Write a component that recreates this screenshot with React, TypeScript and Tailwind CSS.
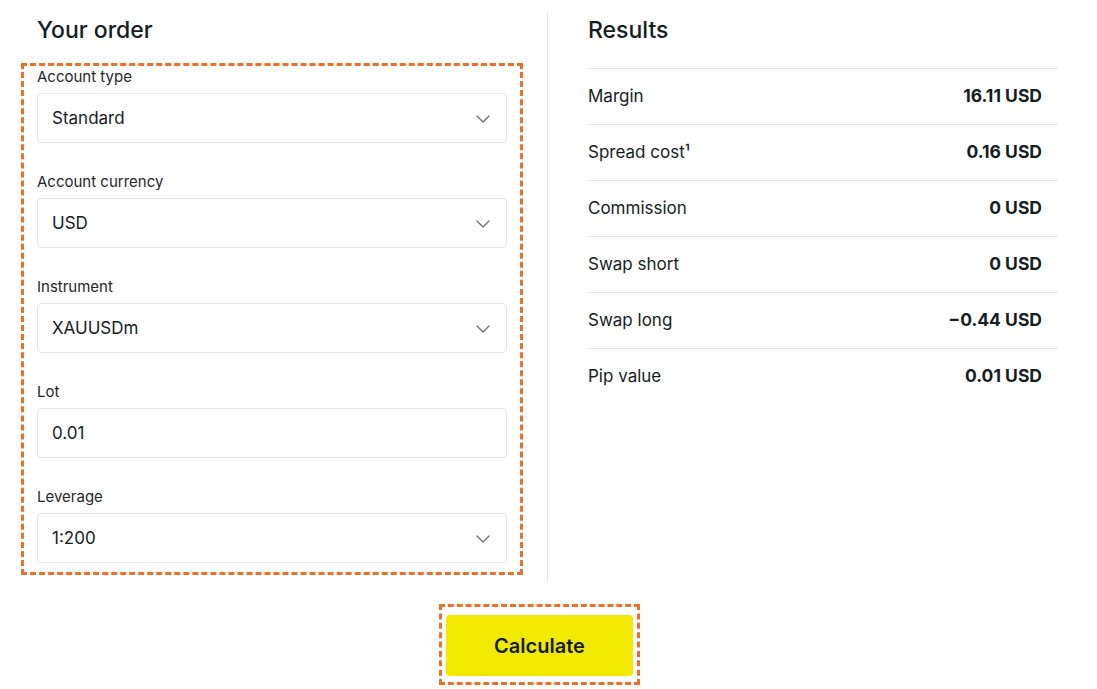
import { ChevronDown } from 'lucide-react'

const fields = [
  { label: 'Account type', value: 'Standard', select: true },
  { label: 'Account currency', value: 'USD', select: true },
  { label: 'Instrument', value: 'XAUUSDm', select: true },
  { label: 'Lot', value: '0.01', select: false },
  { label: 'Leverage', value: '1:200', select: true },
]

const results = [
  { label: 'Margin', value: '16.11 USD' },
  { label: 'Spread cost¹', value: '0.16 USD' },
  { label: 'Commission', value: '0 USD' },
  { label: 'Swap short', value: '0 USD' },
  { label: 'Swap long', value: '−0.44 USD' },
  { label: 'Pip value', value: '0.01 USD' },
]

function Field({ label, value, select }: { label: string; value: string; select: boolean }) {
  return (
    <div className="flex flex-col">
      <label className="text-[15px] leading-[20px] text-[#1f262b] mb-[6px]">{label}</label>
      <div className="h-[50px] flex items-center justify-between rounded-[4px] border border-[#e3e4e5] bg-white pl-[14px] pr-[11px] pt-[1px]">
        <span className="text-[17px] text-[#141d22]">{value}</span>
        {select && <ChevronDown size={24} strokeWidth={1.25} className="text-[#6a6e72]" />}
      </div>
    </div>
  )
}

export default function App() {
  return (
    <div className="min-h-screen bg-white text-[#141d22]" style={{ fontFamily: 'Inter, "Noto Sans", sans-serif' }}>
      <div className="w-[1037px] ml-[21px] pt-[12px]">
        <div className="flex">
          {/* order form */}
          <div className="w-[502px] pb-[6px]">
            <h2 className="ml-[16px] mt-[4px] mb-[19px] text-[23px] leading-[28px] font-medium">Your order</h2>
            <div className="border-[3px] border-dashed border-[#ee7026] px-[13px] pt-[1px] pb-[9px] flex flex-col gap-[29px]">
              {fields.map((f) => (
                <Field key={f.label} {...f} />
              ))}
            </div>
          </div>

          <div className="w-px bg-[#e6e6e6] ml-[24px]" />

          {/* results */}
          <div className="flex-1 pl-[40px]">
            <h2 className="mt-[4px] mb-[24px] text-[23px] leading-[28px] font-medium">Results</h2>
            <div>
              {results.map((r) => (
                <div
                  key={r.label}
                  className="h-[56px] flex items-center justify-between border-t border-[#e6e6e6] pr-[16px]"
                >
                  <span className="text-[17px] text-[#141d22]">{r.label}</span>
                  <span className="text-[17.5px] font-bold text-[#141d22]">{r.value}</span>
                </div>
              ))}
            </div>
          </div>
        </div>

        <div className="flex justify-center mt-[23px]">
          <div className="border-[3px] border-dashed border-[#ee7026] pt-[8px] pl-[4px] pr-[4px] pb-[6px]">
            <button className="w-[187px] h-[61px] rounded-[4px] bg-[#f2e900] text-[20px] font-semibold text-[#141d22]">
              Calculate
            </button>
          </div>
        </div>
      </div>
    </div>
  )
}
